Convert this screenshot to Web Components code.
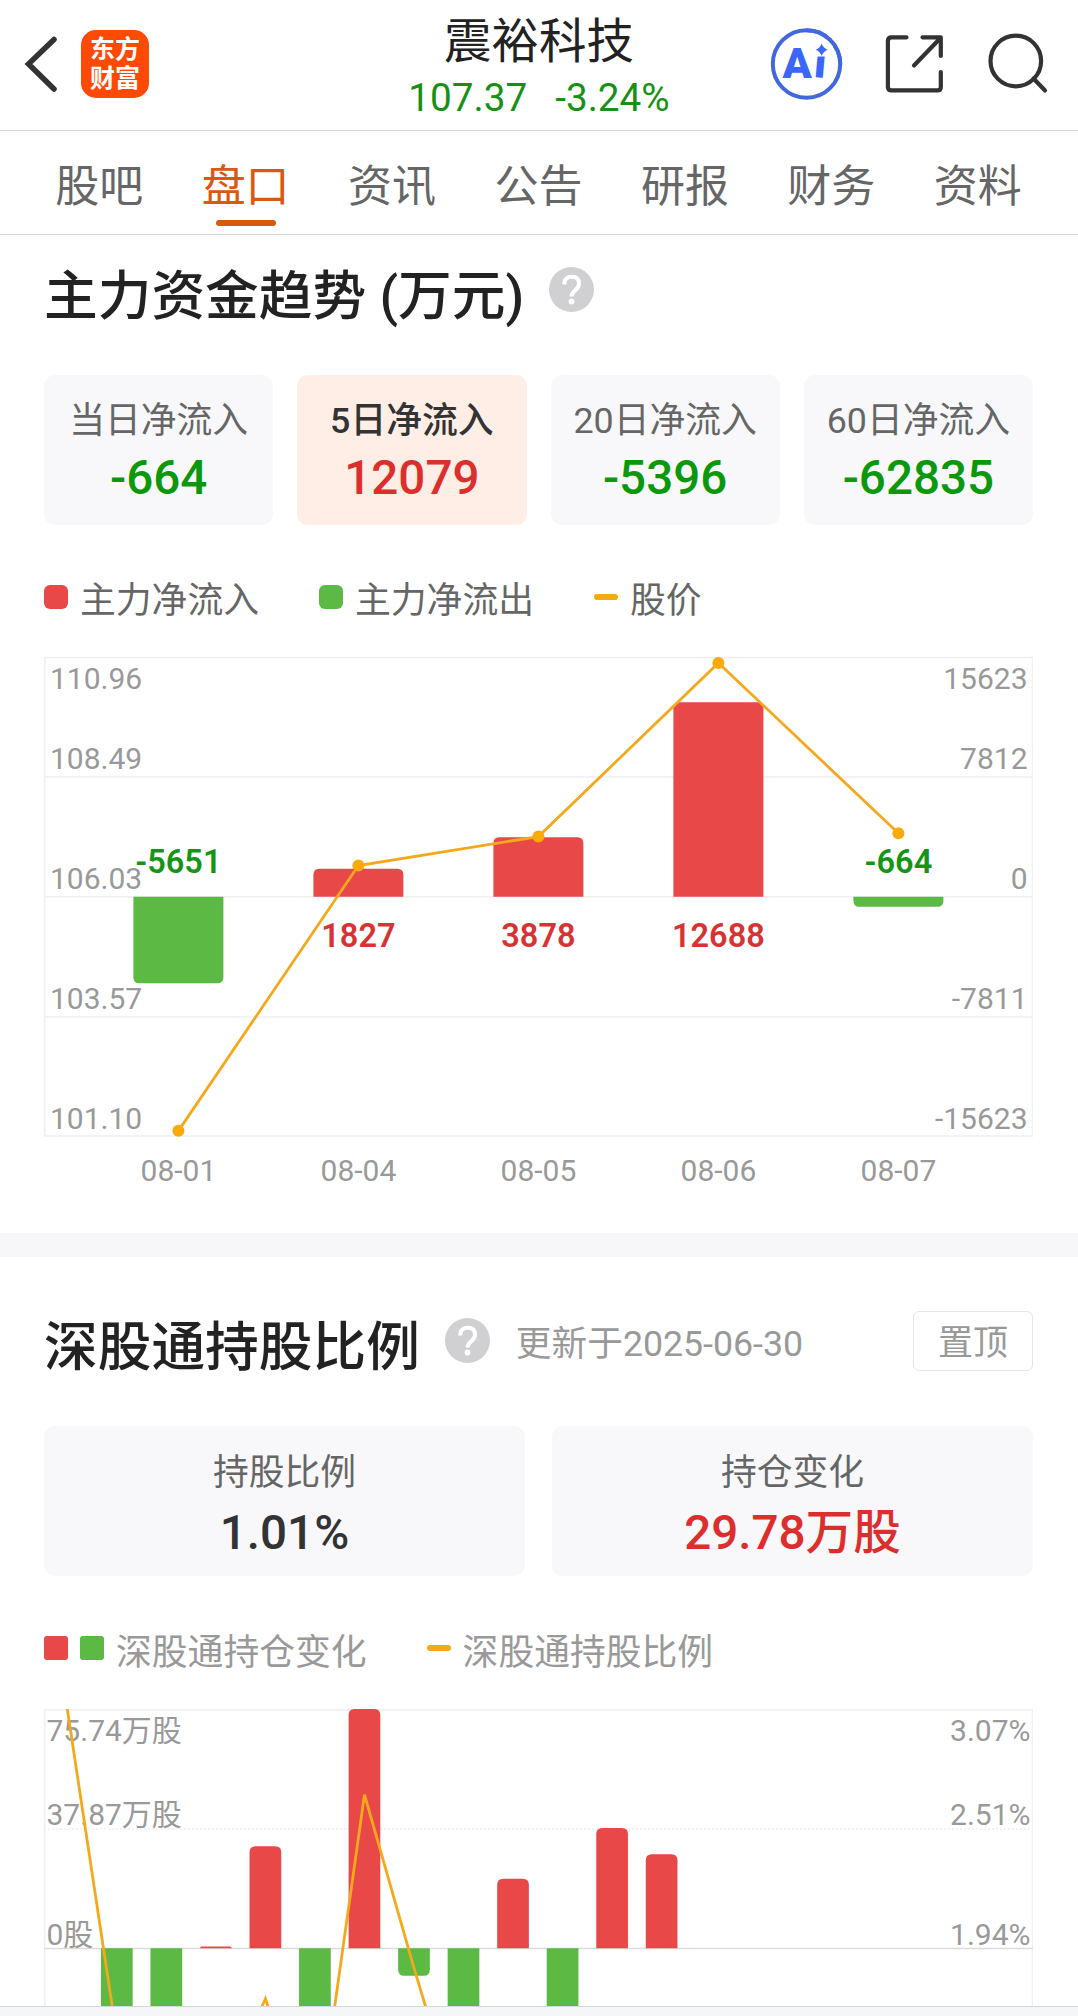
<!DOCTYPE html>
<html lang="zh-CN">
<head>
<meta charset="utf-8">
<title>震裕科技</title>
<style>
  body {
    margin: 0;
    background: #fff;
    font-family: Roboto, "Noto Sans CJK SC", sans-serif;
  }
</style>
</head>
<body>
<stock-page></stock-page>

<script>
/**
 * Creates a template from markup.
 *
 * @param {string} html - The markup of the shadow root.
 * @returns {HTMLTemplateElement} - The template.
 */
function createTemplate (html) {
  const template = document.createElement('template')
  template.innerHTML = html
  return template
}

/**
 * Base class that clones its template into an open shadow root.
 */
class BaseElement extends HTMLElement {
  constructor () {
    super()
    this.attachShadow({ mode: 'open' })
      .appendChild(this.constructor.template.content.cloneNode(true))
  }
}

const RED = '#e84948'
const GREEN = '#5bb944'
const ORANGE = '#f6a81c'

// Top bar with the stock name and price.
customElements.define('stock-header',
  class extends BaseElement {
    static template = createTemplate(`
      <style>
        :host {
          display: grid;
          grid-template-columns: 1fr auto 1fr;
          height: 130px;
          border-bottom: 1px solid #d6d6d6;
        }
        svg { display: block; flex: none; }
        .left, .right {
          display: flex;
          align-items: center;
          padding-bottom: 3px;
        }
        .left { padding-left: 21px; gap: 20px; }
        .right { justify-content: flex-end; padding-right: 29px; }
        .right svg + svg { margin-left: 42px; }
        .logo {
          display: flex;
          flex-direction: column;
          align-items: center;
          justify-content: center;
          width: 68px;
          height: 68px;
          border-radius: 15px;
          background: #ff4a05;
          color: #fff;
          font-size: 25px;
          font-weight: 700;
          line-height: 29px;
        }
        .middle { padding-top: 16px; text-align: center; }
        .name { font-size: 47.500px; line-height: 52px; color: #222; }
        .price {
          display: flex;
          justify-content: center;
          gap: 28px;
          margin-top: 7px;
          font-size: 38.700px;
          line-height: 46px;
          color: #159215;
        }
      </style>
      <div class="left">
        <svg width="40" height="60" viewBox="0 0 40 60">
          <path d="M33 5.500L7.500 30L33 55" fill="none" stroke="#333" stroke-width="5.500" stroke-linecap="round"/>
        </svg>
        <div class="logo"><span>东方</span><span>财富</span></div>
      </div>
      <div class="middle">
        <div class="name"><slot name="name"></slot></div>
        <div class="price"><slot name="price"></slot><slot name="change"></slot></div>
      </div>
      <div class="right">
        <svg width="74" height="74" viewBox="0 0 74 74">
          <circle cx="37.500" cy="37" r="33.700" fill="none" stroke="#4168dc" stroke-width="4"/>
          <text x="13.500" y="50.500" font-family="Roboto" font-size="43" font-weight="900" fill="#3a66fb">A<tspan dx="1.500" dy="-.5" rotate="5">i</tspan></text>
          <rect x="44" y="12" width="20" height="17.500" fill="#fff"/>
          <path d="M52.700 16.500Q54.200 21 58.700 22.800Q54.200 24.600 52.700 29Q51.200 24.600 46.700 22.800Q51.200 21 52.700 16.500Z" fill="#3a66fb"/>
          <path d="M37.500 3.300A33.700 33.700 0 0 1 71.200 37" fill="none" stroke="#4168dc" stroke-width="4"/>
        </svg>
        <svg width="60" height="60" viewBox="0 0 60 60" fill="none" stroke="#333" stroke-width="4.200" stroke-linecap="round" stroke-linejoin="round">
          <path d="M21.500 3.300H6.500Q2.900 3.300 2.900 7V53Q2.900 56.400 6.500 56.400H52.500Q55.800 56.400 55.800 53V38M37.500 3.300H55.800V22M29 31.500L55.500 4"/>
        </svg>
        <svg width="62" height="62" viewBox="0 0 62 62" fill="none" stroke="#333" stroke-width="4.200" stroke-linecap="round">
          <circle cx="28.800" cy="28" r="25.300"/>
          <path d="M46.500 45.500L58 57.500"/>
        </svg>
      </div>
    `)
  }
)

// Row of tabs, the selected one is underlined.
customElements.define('stock-tab',
  class extends BaseElement {
    static template = createTemplate(`
      <style>
        :host {
          flex: 1;
          display: flex;
          flex-direction: column;
          align-items: center;
          padding-top: 26px;
          font-size: 44px;
          line-height: 60px;
          color: #666;
        }
        i { width: 60px; height: 6px; margin-top: 3px; border-radius: 3px; }
        :host([selected]) { color: #d9590f; }
        :host([selected]) i { background: #d9590f; }
      </style>
      <slot></slot><i></i>
    `)
  }
)

customElements.define('stock-tabs',
  class extends BaseElement {
    static template = createTemplate(`
      <style>
        :host {
          display: flex;
          height: 103px;
          padding: 0 27px 0 26px;
          border-bottom: 1px solid #d6d6d6;
        }
      </style>
      <slot></slot>
    `)
  }
)

// Section heading with help icon and optional extras.
customElements.define('section-heading',
  class extends BaseElement {
    static template = createTemplate(`
      <style>
        :host { display: flex; align-items: center; }
        h2 {
          margin: 0;
          padding-top: 14px;
          font-size: 53.700px;
          font-weight: 500;
          line-height: 76px;
          color: #222;
          white-space: nowrap;
        }
        svg { margin: 0 26px 0 25px; }
        .note { padding-top: 7px; font-size: 35.700px; line-height: 48px; color: #999; }
        .action { margin-left: auto; }
      </style>
      <h2><slot></slot></h2>
      <svg width="45" height="45" viewBox="0 0 45 45">
        <circle cx="22.500" cy="22.500" r="22.500" fill="#d0d0d2"/>
        <path d="M15.200 17.500Q15.200 9.800 22.800 9.800Q30 9.800 30 16.700Q30 20 26 23.500Q22.500 26.500 22.500 29.500" fill="none" stroke="#fff" stroke-width="4"/>
        <circle cx="22.500" cy="34.500" r="2.900" fill="#fff"/>
      </svg>
      <div class="note"><slot name="note"></slot></div>
      <div class="action"><slot name="action"></slot></div>
    `)
  }
)

customElements.define('outline-button',
  class extends BaseElement {
    static template = createTemplate(`
      <style>
        :host {
          display: block;
          box-sizing: border-box;
          width: 120px;
          height: 60px;
          margin-top: 1px;
          border: 1.5px solid #e6e6e6;
          border-radius: 6px;
          font-size: 35px;
          line-height: 63px;
          text-align: center;
          color: #999;
        }
      </style>
      <slot></slot>
    `)
  }
)

// Card with a label and a value.
customElements.define('value-card',
  class extends BaseElement {
    static template = createTemplate(`
      <style>
        :host {
          flex: 1;
          box-sizing: border-box;
          height: 150px;
          padding-top: var(--label-top, 24px);
          border-radius: 11px;
          background: #f8f8fa;
          text-align: center;
          color: #333;
        }
        .label { font-size: 35.800px; line-height: 44px; color: #666; }
        .value { margin-top: var(--value-gap, 7px); font-size: 47.600px; font-weight: 500; line-height: 56px; }
        :host([selected]) { background: #ffeee6; }
        :host([selected]) .label { font-weight: 500; color: #333; }
        :host([trend=up]) { color: #dd2e2e; }
        :host([trend=down]) { color: #0c980c; }
      </style>
      <div class="label"><slot></slot></div>
      <div class="value"><slot name="value"></slot></div>
    `)
  }
)

// One legend entry, markers is a list of red, green and line.
customElements.define('legend-item',
  class extends BaseElement {
    static template = createTemplate(`
      <style>
        :host { display: flex; align-items: center; gap: 12px; }
        i { width: 24px; height: 24px; border-radius: var(--marker-radius, 6px); }
        .red { background: ${RED}; }
        .green { background: ${GREEN}; }
        .line { height: 6px; border-radius: 3px; background: #f5a915; }
        span { padding-top: var(--text-drop, 8px); }
      </style>
      <span><slot></slot></span>
    `)

    connectedCallback () {
      const text = this.shadowRoot.querySelector('span')
      for (const name of this.getAttribute('markers').split(' ')) {
        const marker = document.createElement('i')
        marker.className = name
        text.before(marker)
      }
    }
  }
)

customElements.define('chart-legend',
  class extends BaseElement {
    static template = createTemplate(`
      <style>
        :host {
          display: flex;
          gap: 60px;
          height: 48px;
          margin: 48px 0 35px;
          font-size: 35.800px;
          line-height: 38px;
          color: #666;
        }
      </style>
      <slot></slot>
    `)
  }
)

/**
 * Bars around a zero line with a line series on top.
 */
class BarLineChart extends HTMLElement {
  constructor () {
    super()
    this.attachShadow({ mode: 'open' })
  }

  /**
   * Returns the path of a bar, rounded at the end away from zero.
   */
  barPath (x, width, zero, end) {
    const height = Math.abs(end - zero)
    const r = Math.min(6, height)
    const s = end < zero ? 1 : -1
    return `M${x} ${zero}V${end + s * r}Q${x} ${end} ${x + r} ${end}H${x + width - r}Q${x + width} ${end} ${x + width} ${end + s * r}V${zero}Z`
  }

  bars (values, firstX, step, width, zero, scale) {
    return values.map((value, i) => {
      const x = firstX + i * step - width / 2
      return `<path d="${this.barPath(x, width, zero, zero - value * scale)}" fill="${value < 0 ? GREEN : RED}"/>`
    }).join('')
  }

  labels (texts, x, baselines, anchor) {
    return texts.map((text, i) =>
      `<text x="${x}" y="${baselines[i]}" text-anchor="${anchor}">${text}</text>`).join('')
  }

  render (height, content) {
    this.shadowRoot.innerHTML = `
      <style>
        :host { display: block; }
        svg { display: block; font-size: 30px; fill: #999; }
        .grid { fill: none; stroke: #efefef; stroke-width: 1.500; }
        .series { fill: none; stroke: ${ORANGE}; stroke-width: 2.800; }
        .value { font-size: 32.500px; font-weight: 600; text-anchor: middle; }
      </style>
      <svg width="989" height="${height}" viewBox="0 0 989 ${height}">${content}</svg>
    `
  }
}

customElements.define('flow-chart',
  class extends BarLineChart {
    connectedCallback () {
      const days = ['08-01', '08-04', '08-05', '08-06', '08-07']
      const flows = [-5651, 1827, 3878, 12688, -664]
      const prices = [101.10, 106.69, 107.30, 110.96, 107.37]
      const zero = 240.7
      const baselines = [32.5, 113, 232.5, 352.8, 473]
      const x = i => 134.4 + i * 180
      const points = prices.map((price, i) => [x(i), 6.9 + (110.96 - price) * 47.46])

      this.render(577, `
        <path class="grid" d="M.8 1.400H988.500V480H.8ZM0 120.900H989M0 240.700H989M0 360.900H989"/>
        ${this.labels(['110.96', '108.49', '106.03', '103.57', '101.10'], 6, baselines, 'start')}
        ${this.labels(['15623', '7812', '0', '-7811', '-15623'], 983.5, baselines, 'end')}
        ${this.bars(flows, x(0), 180, 90, zero, 239.3 / 15623)}
        <polyline class="series" points="${points.join(' ')}"/>
        ${points.map(([px, py]) => `<circle cx="${px}" cy="${py}" r="6" fill="#fca90a"/>`).join('')}
        ${flows.map((flow, i) => `<text class="value" x="${x(i)}" y="${flow < 0 ? 217.4 : 291}" fill="${flow < 0 ? '#159515' : '#d63434'}">${flow}</text>`).join('')}
        ${days.map((day, i) => `<text x="${x(i)}" y="525.2" text-anchor="middle">${day}</text>`).join('')}
      `)
    }
  }
)

customElements.define('holding-chart',
  class extends BarLineChart {
    connectedCallback () {
      const changes = [-40, -40, 0.6, 32.3, -40, 75.74, -8.7, -40, 22, -40, 38.1, 29.78]
      const ratios = [3.07, 1.52, 1.10, 1.18, 1.70, 1.00, 2.665, 1.845, 1.07]
      const baselines = [31.7, 115.7, 235.7]
      const points = ratios.map((ratio, i) => [23.3 + i * 49.53, (3.07 - ratio) * 211.5])

      this.render(480, `
        <path class="grid" d="M.8 480V.8H988.500V480"/>
        <path class="grid" d="M0 120H989" stroke-dasharray="2 2"/>
        <path class="grid" d="M0 239.500H989" style="stroke: #dcdcdc"/>
        ${this.labels(['75.74万股', '37.87万股', '0股'], 2.5, baselines, 'start')}
        ${this.labels(['3.07%', '2.51%', '1.94%'], 986.5, baselines, 'end')}
        ${this.bars(changes, 72.8, 49.53, 31.7, 239.3, 239.3 / 75.74)}
        <polyline class="series" points="${points.join(' ')}"/>
      `)
    }
  }
)

customElements.define('stock-page',
  class extends BaseElement {
    static template = createTemplate(`
      <style>
        :host {
          display: flex;
          flex-direction: column;
          height: 2016px;
          overflow: hidden;
        }
        section { padding: 0 45px 0 44px; }
        .cards { display: flex; gap: 24px; }
        .flow { height: 998px; border-bottom: 24px solid #f7f7fa; }
        .flow section-heading { height: 109px; margin-bottom: 31px; }
        .holding { flex: 1; min-height: 0; overflow: hidden; }
        .holding section-heading { height: 167px; margin-bottom: 2px; }
        .holding .cards { gap: 27px; --label-top: 25px; --value-gap: 10px; }
        .holding chart-legend { margin-bottom: 37px; color: #999; --marker-radius: 3px; --text-drop: 10px; }
        footer { height: 9px; border-top: 1px solid #d3d7da; background: #f5f6f8; }
      </style>
      <stock-header>
        <span slot="name">震裕科技</span>
        <span slot="price">107.37</span>
        <span slot="change">-3.24%</span>
      </stock-header>
      <stock-tabs>
        <stock-tab>股吧</stock-tab>
        <stock-tab selected>盘口</stock-tab>
        <stock-tab>资讯</stock-tab>
        <stock-tab>公告</stock-tab>
        <stock-tab>研报</stock-tab>
        <stock-tab>财务</stock-tab>
        <stock-tab>资料</stock-tab>
      </stock-tabs>
      <section class="flow">
        <section-heading>主力资金趋势 (万元)</section-heading>
        <div class="cards">
          <value-card trend="down">当日净流入<span slot="value">-664</span></value-card>
          <value-card trend="up" selected>5日净流入<span slot="value">12079</span></value-card>
          <value-card trend="down">20日净流入<span slot="value">-5396</span></value-card>
          <value-card trend="down">60日净流入<span slot="value">-62835</span></value-card>
        </div>
        <chart-legend>
          <legend-item markers="red">主力净流入</legend-item>
          <legend-item markers="green">主力净流出</legend-item>
          <legend-item markers="line">股价</legend-item>
        </chart-legend>
        <flow-chart></flow-chart>
      </section>
      <section class="holding">
        <section-heading>深股通持股比例
          <span slot="note">更新于2025-06-30</span>
          <outline-button slot="action">置顶</outline-button>
        </section-heading>
        <div class="cards">
          <value-card>持股比例<span slot="value">1.01%</span></value-card>
          <value-card trend="up">持仓变化<span slot="value">29.78万股</span></value-card>
        </div>
        <chart-legend>
          <legend-item markers="red green">深股通持仓变化</legend-item>
          <legend-item markers="line">深股通持股比例</legend-item>
        </chart-legend>
        <holding-chart></holding-chart>
      </section>
      <footer></footer>
    `)
  }
)
</script>
</body>
</html>
